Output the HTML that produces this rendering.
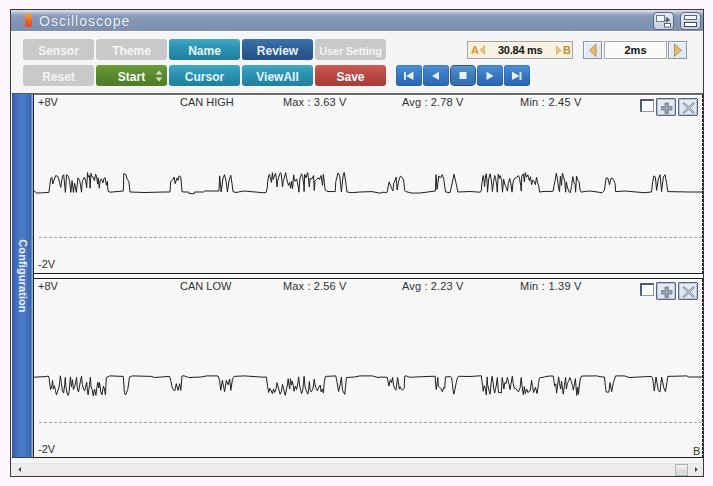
<!DOCTYPE html>
<html><head><meta charset="utf-8">
<style>
*{margin:0;padding:0;box-sizing:border-box}
html,body{width:713px;height:486px;overflow:hidden;background:#fdf7fd;font-family:"Liberation Sans",sans-serif;position:relative}
div{position:absolute}
#win{left:10px;top:9px;width:694px;height:468px;border:1px solid #3a3a3a;background:#f5f5f5;box-shadow:inset 1px 0 0 #fff}
#title{left:11px;top:10px;width:692px;height:21px;background:linear-gradient(#d8dfec 0px,#cbd3e3 1.5px,#b0bcd2 3px,#98a7c3 4.5px,#8a9aba 6px,#8395b5 12px,#7e90b1 21px)}
#ttl{left:39px;top:13px;color:#f2f4f8;font-size:14px;letter-spacing:1px;line-height:17px;text-shadow:0 0 1px rgba(70,85,120,.7)}
.btn{top:0;width:71px;height:21px;border-radius:3px;color:#f6fbfd;font-weight:bold;font-size:12px;text-align:center;line-height:25px}
.g{background:#c9c9c9;color:#f5f5f5}
.teal{color:#e6f6fa;background:linear-gradient(#41a9c2,#2a92b0 45%,#217f9f)}
.navy{color:#eaf2fa;background:linear-gradient(#3f73aa,#2d5f98 45%,#254f88)}
.green{background:linear-gradient(#6c9c3c,#5a8a30 45%,#4d7b27)}
.red{background:linear-gradient(#cc5e58,#b94843 45%,#a93c38)}
.nav{top:65px;width:26px;height:21px;border-radius:3px;background:linear-gradient(#4d8fd6,#3678c2 50%,#2a66b0);box-shadow:inset 0 0 0 1px rgba(30,70,130,.25)}
.nav.stop{border-radius:5px;background:linear-gradient(#5a95d0,#3d7bbd 50%,#3570b0);box-shadow:inset 0 0 0 1px rgba(30,60,110,.7)}
.nav svg,.ib svg{position:absolute;left:0;top:0}
#side{left:12px;top:93px;width:21px;height:365px;border-top:1px solid #4a5a78;border-bottom:1px solid #2a4070;background:linear-gradient(90deg,#34559e 0,#3d63ad 2px,#4a78c6 7px,#4c7bca 11px,#426fbb 16px,#3864ae 19px,#8cb0e0 20px,#8cb0e0 21px)}
#conf{left:-15px;top:269px;width:76px;height:14px;transform:rotate(90deg);color:#eef2fa;font-weight:bold;font-size:11px;line-height:14px;text-align:center;letter-spacing:0.1px}
.chart{left:33px;width:670px;height:180px;border:1px solid #1e1e1e;border-right:none;background:#f7f7f7;box-shadow:inset 1px 1px 0 #fff}
.lbl{font-size:11px;color:#303030;white-space:nowrap;line-height:13px}
.dash{left:39px;width:663px;height:1px;background:repeating-linear-gradient(90deg,#a4a4a4 0,#a4a4a4 3px,transparent 3px,transparent 5px)}
.cb{width:14px;height:13px;border:1px solid #8c9ab0;border-top:2px solid #4e5e78;border-left:2px solid #4e5e78;background:#fff}
.ib{width:20px;height:18px;border:1px solid #5a6780;border-radius:1px;background:linear-gradient(#e8edf5,#dfe5ef);box-shadow:inset 0 0 0 1px #b8c2d0}
.abbox{left:467px;top:41px;width:106px;height:18px;border:1px solid #a4a4a4;background:#f7f3e3}
.arrb{top:41px;width:19px;height:18px;border:1px solid #8c94a4;background:#e4eaf5;box-shadow:inset 1px 1px 0 #f6f8fc}
.tbox{left:604px;top:41px;width:63px;height:18px;border:1px solid #a8a8a8;background:#fafafa;font-weight:bold;font-size:11px;text-align:center;line-height:17px;color:#111}
</style></head><body>
<div id="win"></div>
<div id="title"></div>
<div style="left:11px;top:31px;width:692px;height:1px;background:#fff"></div>
<div style="left:25px;top:13px;width:7px;height:14px;border-radius:3px 3px 1px 1px;background:linear-gradient(#f2a23a,#ee8a2c 35%,#e8602a 50%,#e4502a)"></div>
<div id="ttl">Oscilloscope</div>
<div style="left:653px;top:12px;width:21px;height:18px;border:1px solid #5a6a88;border-radius:4px;background:linear-gradient(#e4e9f2,#c6cfe0)"><svg width="19" height="16" style="position:absolute;left:0;top:0"><rect x="2.5" y="2.5" width="8" height="6" fill="#f4f6fa" stroke="#6b7a96" stroke-width="1"/><rect x="10.5" y="10.5" width="6" height="3.5" fill="#fff" stroke="#56647f" stroke-width="1"/><path d="M12 4.5 L15 7 L12 9 M11 7 H15" stroke="#3d4a60" stroke-width="1.2" fill="none"/></svg></div>
<div style="left:680px;top:12px;width:21px;height:18px;border:1px solid #5a6a88;border-radius:4px;background:linear-gradient(#e4e9f2,#c6cfe0)"><svg width="19" height="16" style="position:absolute;left:0;top:0"><rect x="3.5" y="2.5" width="12" height="4" fill="#f4f6fa" stroke="#56647f" stroke-width="1"/><rect x="3.5" y="9.5" width="12" height="4" fill="#fff" stroke="#3d4a60" stroke-width="1"/></svg></div>

<div style="left:23px;top:39px;width:400px;height:50px">
  <div class="btn g" style="left:0">Sensor</div>
  <div class="btn g" style="left:73px">Theme</div>
  <div class="btn teal" style="left:146px">Name</div>
  <div class="btn navy" style="left:219px">Review</div>
  <div class="btn g" style="left:292px;font-size:11px;letter-spacing:-0.2px">User Setting</div>
  <div class="btn g" style="left:0;top:26px">Reset</div>
  <div class="btn green" style="left:73px;top:26px;text-indent:0">Start<svg width="8" height="12" style="position:absolute;left:59px;top:5px"><path d="M4 0.5 L7.5 4.5 L0.5 4.5Z M4 11.5 L7.5 7.5 L0.5 7.5Z" fill="#cfe0bf"/></svg></div>
  <div class="btn teal" style="left:146px;top:26px">Cursor</div>
  <div class="btn teal" style="left:219px;top:26px">ViewAll</div>
  <div class="btn red" style="left:292px;top:26px">Save</div>
</div>
<div class="nav" style="left:396px"><svg width="25" height="21"><rect x="8" y="7" width="2" height="8" fill="#dbe8f8"/><path d="M17.5 6.5 L10 11 L17.5 15 Z" fill="#e4eefa"/></svg></div>
<div class="nav" style="left:423px"><svg width="25" height="21"><path d="M16 6.5 L9 11 L16 15 Z" fill="#e4eefa"/></svg></div>
<div class="nav stop" style="left:450px"><svg width="25" height="21"><rect x="9.5" y="7" width="7" height="7" fill="#eef4fc"/></svg></div>
<div class="nav" style="left:477px"><svg width="25" height="21"><path d="M9.5 6.5 L16.5 11 L9.5 15 Z" fill="#e4eefa"/></svg></div>
<div class="nav" style="left:504px"><svg width="25" height="21"><path d="M8 6.5 L15.5 11 L8 15 Z" fill="#e4eefa"/><rect x="15.5" y="7" width="2" height="8" fill="#dbe8f8"/></svg></div>

<div class="abbox"></div>
<div class="arrb" style="left:583px"></div>
<div class="tbox">2ms</div>
<div class="arrb" style="left:668px"></div>

<div id="side"></div>
<div id="conf">Configuration</div>
<div class="chart" style="top:93px;height:181px;border-top:2px solid #6a6a6a"></div>
<div class="chart" style="top:278px;height:180px"></div>
<div style="left:33px;top:274px;width:670px;height:4px;background:#fbfbfb;border-left:1px solid #1e1e1e"></div>
<div class="dash" style="top:237px"></div>
<div class="dash" style="top:422px"></div>

<div class="lbl" style="left:38px;top:96px">+8V</div>
<div class="lbl" style="left:180px;top:96px">CAN HIGH</div>
<div class="lbl" style="left:283px;top:96px;letter-spacing:0.15px">Max : 3.63 V</div>
<div class="lbl" style="left:402px;top:96px;letter-spacing:0.15px">Avg : 2.78 V</div>
<div class="lbl" style="left:520px;top:96px;letter-spacing:0.25px">Min : 2.45 V</div>


<div class="lbl" style="left:38px;top:280px">+8V</div>
<div class="lbl" style="left:180px;top:280px">CAN LOW</div>
<div class="lbl" style="left:283px;top:280px;letter-spacing:0.15px">Max : 2.56 V</div>
<div class="lbl" style="left:402px;top:280px;letter-spacing:0.15px">Avg : 2.23 V</div>
<div class="lbl" style="left:520px;top:280px;letter-spacing:0.25px">Min : 1.39 V</div>

<div class="lbl" style="left:38px;top:258px">-2V</div>
<div class="lbl" style="left:38px;top:443px">-2V</div>

<div class="cb" style="left:640px;top:99px"></div>
<div class="ib" style="left:656px;top:98px"><svg width="20" height="18"><path d="M8 4h3.5v3.5h3.5v3.5h-3.5v3.5H8v-3.5H4.5V7.5H8z" fill="#949eae" stroke="#6e7888" stroke-width="0.8"/></svg></div>
<div class="ib" style="left:678px;top:98px"><svg width="20" height="18"><path d="M5 4.5 L14.5 13.5 M14.5 4.5 L5 13.5" stroke="#7c8696" stroke-width="2.4" stroke-linecap="round"/><path d="M5 4.5 L14.5 13.5 M14.5 4.5 L5 13.5" stroke="#dfe5ee" stroke-width="0.9" stroke-linecap="round"/></svg></div>


<div class="cb" style="left:640px;top:283px"></div>
<div class="ib" style="left:656px;top:282px"><svg width="20" height="18"><path d="M8 4h3.5v3.5h3.5v3.5h-3.5v3.5H8v-3.5H4.5V7.5H8z" fill="#949eae" stroke="#6e7888" stroke-width="0.8"/></svg></div>
<div class="ib" style="left:678px;top:282px"><svg width="20" height="18"><path d="M5 4.5 L14.5 13.5 M14.5 4.5 L5 13.5" stroke="#7c8696" stroke-width="2.4" stroke-linecap="round"/><path d="M5 4.5 L14.5 13.5 M14.5 4.5 L5 13.5" stroke="#dfe5ee" stroke-width="0.9" stroke-linecap="round"/></svg></div>

<svg width="713" height="486" style="position:absolute;left:0;top:0">
<polyline points="34,191 36.7,193 42.6,192.8 48.9,192.4 49.8,185.7 50.6,179 51.9,177.3 52.7,184 54.4,179 55.7,175.6 57.8,176.4 59.5,182.3 60.7,187.4 62.4,176.4 63.7,174.7 65.4,192.4 66.6,174.7 68.3,176.4 69.6,181.5 70.8,192.4 72.1,180.6 73.4,192.4 74.6,183.2 76.3,192.4 78,177.8 79.7,180.7 80.6,185.9 81.5,192.2 82.3,181.3 84.3,177.2 85.5,180.1 86.7,187.6 87.5,172.6 88.4,177.2 89.5,175.5 90.1,188.2 91,173.2 91.8,176.7 93.3,177.2 94.4,180.7 95.6,174.3 96.5,176.1 97.6,184.1 98.2,177.8 99.3,188.2 100.2,180.1 101.4,179 102.8,183 104,178.4 105.1,177.8 106.3,185.3 107.4,181.3 108,191.1 110,192.2 123.3,191 123.8,173.6 126,174.7 127.2,179.2 128.9,181.5 130,192 145,192.5 164,192 170,192 170.7,181.5 172.4,180.3 174.1,177 175.2,183.7 176.9,178.1 178,180.3 179.2,175.9 180.8,177 182,191.6 184,192 188.7,192 189,193.6 194.3,193.6 194.5,192 203.3,192 204.4,191 219,191 219.6,175.9 221.2,192 223,178 224.6,174.7 226.3,182.6 227.4,192 229.1,180.3 230.8,175.3 232,183.7 233,191.6 236,192.5 244,191 244,191 264,192.8 266.3,192.2 267.2,188.2 267.7,181.8 268.6,176.1 269.5,174.3 270.3,177.8 271.5,182.4 272.4,172.6 273.2,179.5 274.4,176.1 275.5,173.2 276.4,178.4 277,187 277.6,181.3 278.7,177.2 280.4,172.6 281.3,174.3 282.5,187 283.3,180.7 284.5,177.2 285.6,172.6 286.5,177.8 287.6,182.4 288.5,185.3 289.7,182.4 290.5,188.2 291.7,181.3 292.5,188.8 293.7,174.9 294.6,180.7 295.2,181.3 296.6,179 298.3,187 298.9,192.2 299.8,179 301.5,173.8 302.7,176.7 303.8,185.3 304.1,191.6 304.7,174.3 306.1,177.8 307.6,172.6 308.4,177.8 309.3,187 310.1,178.4 311.9,179 313.6,175.5 314.2,190.5 315,181.3 316.5,179.5 318.2,177.8 319.4,179.5 321.1,175.5 322.5,185.3 323.4,174.3 324.3,182.4 325.1,189.9 326,190.5 328,191.5 335.2,191.6 335.8,181.5 338,173 339.7,175.9 341.4,192 343.1,175.9 344.2,172.5 345.3,179.2 347,192 352,192.7 360,192 372,191.6 380,193.2 382,192.5 384,192.2 386.6,192.8 387.5,191 388.3,185.3 389.2,181.8 390.3,185.3 391.5,188.2 392.9,191 393.8,183 394.9,180.7 396.1,177.2 397.2,189.9 398.4,182.4 399.6,177.8 400.7,176.1 401.9,177.2 403.6,180.1 404.7,190.5 405.9,191.6 408.2,192.2 412,193.1 420,193 435.4,191 436,174.7 437.1,189.3 438.8,175.9 440.5,178 442.2,174.7 443.8,179.2 445.5,192 450,192.7 451.1,188.2 454,174.2 456.2,183.7 457.9,192 470,191.5 470,191.5 480,192.2 481.2,191.1 482,182.4 483.2,175.5 484,180.7 484.6,186.5 485.5,175.5 486.3,173.8 487.2,183.6 487.5,192.2 488.7,179 490.1,173.8 491.2,179.5 492.1,187 492.4,191.6 493.6,181.8 494.7,175.5 495.6,178.4 496.7,185.3 497.3,192.2 498.2,174.3 499.3,178.4 500.2,175.5 501.6,180.1 502.5,192.2 503.6,179 504.5,183 505.7,186.5 506.5,188.2 507.4,191.1 508.3,183.6 509.7,178.4 510.9,183.6 512,192.2 513.2,181.3 514.6,178.4 516.3,177.8 518.4,175.5 519.5,178.4 520.7,185.3 521.2,191.1 521.8,176.1 523.3,173.8 524.4,181.8 525.3,172.6 526.4,177.2 527.9,174.9 529.3,180.7 530.5,176.7 531.6,184.7 532.8,180.1 534.2,181.8 535.4,184.7 536.5,177.2 537.7,183 538.8,186.5 539.7,192.2 542,191.6 546,191.3 550,191.6 553.2,191.1 554,185.3 554.9,181.8 556.3,173.2 557.5,179.5 558.6,188.2 559.5,191.6 560.4,176.1 561.5,185.3 562.4,173.2 563.5,176.6 564.7,181.3 565.6,192.2 566.4,181.8 567.3,187 568.7,191.1 570.2,192.8 571.6,186.4 572.8,176.6 573.9,182.4 575.1,184.1 575.6,192.2 576.5,176.1 577.7,180.1 579.1,181.8 580,189.9 581.4,192.2 584,191.6 590,191 602.2,192.7 604.4,190.4 606.1,178 607.8,178 609.5,184.8 611.1,178 613.4,179.2 615.1,183.7 615.6,191.6 625,191 644,192.7 651.5,192 652.6,182.6 653.8,175.9 655.4,177 656.6,190.4 658.3,179.2 660,174.7 661.6,191.6 663.3,177 665,174.7 666.7,183.7 667.8,191.6 690,192 702,192" fill="none" stroke="#1e1e1e" stroke-width="1" stroke-linejoin="miter" stroke-miterlimit="3"/>
<polyline points="34,377.2 46,376.6 48.3,376 49.2,378.1 49.7,383.3 50.6,389.6 51.8,385.6 52.6,380.4 53.2,389 54.4,385.6 55.5,390.8 56.4,394.8 57.8,390.8 59,387.3 59.8,381.5 60.4,375.8 61.3,382.7 62.4,390.8 63.6,393 64.7,384.4 65.3,377.5 65.9,386.7 67,393 68.2,395.4 69.1,391.9 69.9,381.5 70.5,376.9 71.4,386.7 72.5,379.8 73.4,389.6 74.8,386.1 76,380.4 76.6,377.5 77.4,389 78.6,391.9 79.7,385 80.6,380.4 81.5,376.3 82.3,384.4 83.5,389 84.7,390.8 85.8,386.1 86.7,382.1 87.5,391.3 88.1,394.8 89.6,384.4 90.4,377.2 91,386.7 92.1,389.6 93.3,396 94.5,389 95.9,395.4 97,386.7 97.9,382.1 98.8,387.9 99.6,382.7 100.8,391.9 102,394.8 103.4,386.1 104.5,389 105.4,394.8 106.3,378.1 107.1,376.9 108,376.9 109.8,375.9 123.3,376.4 124.4,392.7 125.5,395 127.8,389.3 129.5,377 132.3,375.9 151.3,376.4 154.7,377.5 169.6,376.4 170.7,380.3 172.4,388.2 174.7,391 176.3,383.7 178,390.4 179.7,383.7 180.8,390.4 182,375.9 184.2,375.9 188.7,377.5 201,377 206.6,375.9 217.9,375.9 219.6,380.3 220.7,390.4 222.4,380.3 224.6,391.6 226.3,380.3 228,384.8 229.7,379.2 230.8,390.4 232.5,379.2 234.2,376.4 244,375.9 244,375.9 264,377.2 266.3,376.9 266.9,381 267.7,386.7 268.6,392.5 269.8,388.5 270.9,390.2 272.4,393.6 273.5,389 274.7,392.5 276.1,388.5 277,382.7 277.8,385.6 278.7,389 280.1,394.2 281.3,391.9 282.5,384.4 283.3,387.3 284.5,393 285.3,395.4 286.5,389 287.4,385 288.2,378.7 288.8,383.8 289.7,389 290.5,378.7 291.4,385 292.3,381 293.1,385 294,391.3 295.4,386.1 296.6,389.6 298,382.1 298.6,376.9 299.5,385 300.3,388.5 301.5,393.6 302.7,390.2 303.5,382.7 304.1,376.3 305,386.7 306.1,390.2 307.8,394.2 308.7,389 309.3,381.5 310.1,389.6 311.3,391.9 312.7,389.6 313.6,385 314.2,379.2 315,385 316.2,388.5 317.4,390.8 318.8,387.3 320.2,385 321.1,391.9 322.3,389 323.4,393 324.3,381.5 325.4,376.3 325.7,376.4 335.8,375.9 336.9,381.5 338.6,391.6 340.3,383.7 341.4,377 342.5,390.4 344.8,394.4 346.4,377.5 354.3,377 359.9,375.9 372.3,375.9 377.9,377.5 382,377 384,377.2 387.2,377.2 387.7,379.8 388.9,386.1 389.8,381.5 390.6,379.8 391.5,382.7 392.6,377.5 393.5,385 394.7,388.4 395.8,390.2 396.7,385 397.5,377.5 398.4,381.5 399.3,389 400.1,386.7 401.3,389 402.4,390.2 404.2,388.4 404.7,376.3 406.2,375.8 409.3,377.2 412,377.2 415.2,377 432,376.3 435.2,376.3 435.5,383.2 436.3,389.6 437.8,377.5 438.3,386.1 439.5,387.3 441.2,389 442.4,391.9 443.8,387.3 444.7,388.4 445.5,376.9 450.4,376.6 451.6,377.5 452.4,383.8 453,390.2 453.9,394.2 455,389 456.2,382.7 457.3,378.1 458.5,376.3 460,376.3 470,376.5 480,375.8 481.4,375.8 481.7,379.8 482.6,385.6 483.2,391.3 484.3,385.6 485.5,389.6 486.3,394.8 487.2,376.9 487.5,384.4 488.4,387.3 489.2,391.3 490.1,394.2 491.2,382.7 492.1,376.3 493,382.1 493.8,389 494.7,393 495.6,388.5 496.4,385 497.3,377.5 497.9,385 498.5,392.5 499.9,392.5 501.3,393 502.2,377.5 503.1,383.3 503.9,389 504.8,382.7 506.2,383.3 507.4,377.5 508.3,381.5 509.1,384.4 510,389.6 510.9,384.4 512.3,376.3 513.2,383.3 514.3,388.5 515.8,388.5 518.4,391.9 520.1,387.9 521.2,377.5 522.1,386.1 523.3,394.8 524.4,386.7 525.3,393.6 526.7,389 527.9,392.5 530.2,390.8 531.6,380.4 532.5,386.1 533.6,392.5 535.4,387.3 537.1,393.6 538.5,383.3 539.4,378.1 540,377.5 542,377.5 544.6,377 544.6,377 546,376.5 550,376 553.2,376 553.7,379.2 554.6,386.1 555.8,383.8 556.6,393.1 557.5,386.1 558.6,376.9 559.5,383.3 560.7,389 561.5,381 562.7,390.2 563.3,394.2 564.4,385.6 565.6,377.5 566.4,389 567.3,383.8 568.4,381.5 569.9,377.5 571.3,381.5 572.5,385.6 573.3,390.2 574.5,383.8 575.4,378.6 576.2,389 576.8,395.4 577.7,387.3 578.5,394.2 579.4,385 580.5,378.1 581.7,376 584,376 596.5,375.9 602.2,377 604.4,377 606.1,392.1 608.9,392.1 610,382.6 611.7,391.6 613.4,382.6 615.6,375.9 624.6,375.9 629.1,377.5 651.5,376.4 652.6,378.1 654.3,391 656,377 658.3,390.4 660,392.1 661.6,377 663.9,388.2 665.5,391.6 667.8,376.4 686.9,375.9 688.6,377 702,377" fill="none" stroke="#1e1e1e" stroke-width="1" stroke-linejoin="miter" stroke-miterlimit="3"/>
<line x1="702.5" y1="95" x2="702.5" y2="273" stroke="#111" stroke-width="1" stroke-dasharray="3,1"/><line x1="702.5" y1="279" x2="702.5" y2="457" stroke="#111" stroke-width="1" stroke-dasharray="3,1"/>
<path d="M484.5 45.5 L480 50 L484.5 54.5Z" fill="#f0c080" stroke="#c0a060" stroke-width="0.6"/>
<path d="M556.5 46 L561 50.5 L556.5 54.5Z" fill="#f0c080" stroke="#b8a070" stroke-width="0.6"/>
<path d="M596 44 L589.5 50.3 L596 56.5Z" fill="#f0b860" stroke="#a08860" stroke-width="0.8"/>
<path d="M674.5 44 L681.5 50.3 L674.5 56.5Z" fill="#f0b860" stroke="#a08860" stroke-width="0.8"/>
</svg>
<div class="lbl" style="left:471px;top:44px;font-size:11px;color:#e89030;font-weight:bold">A</div>
<div class="lbl" style="left:498px;top:44px;font-size:11px;font-weight:bold;color:#111;letter-spacing:-0.25px">30.84 ms</div>
<div class="lbl" style="left:563px;top:44px;font-size:11px;color:#c88a38;font-weight:bold">B</div>
<div class="lbl" style="left:693px;top:445px;font-size:11px;color:#333">B</div>

<div style="left:11px;top:463px;width:692px;height:13px;background:#ececec;border-top:1px dotted #dedede"></div>
<div style="left:675px;top:464px;width:13px;height:12px;border:1px solid #b4b4b4;background:linear-gradient(#f4f4f4,#d8dadc 70%,#e0e0e0)"></div>
<svg width="713" height="486" style="position:absolute;left:0;top:0">
<path d="M21 467 L18.2 469.5 L21 472Z" fill="#444"/>
<path d="M695 467 L697.8 469.5 L695 472Z" fill="#444"/>
</svg>
</body></html>
